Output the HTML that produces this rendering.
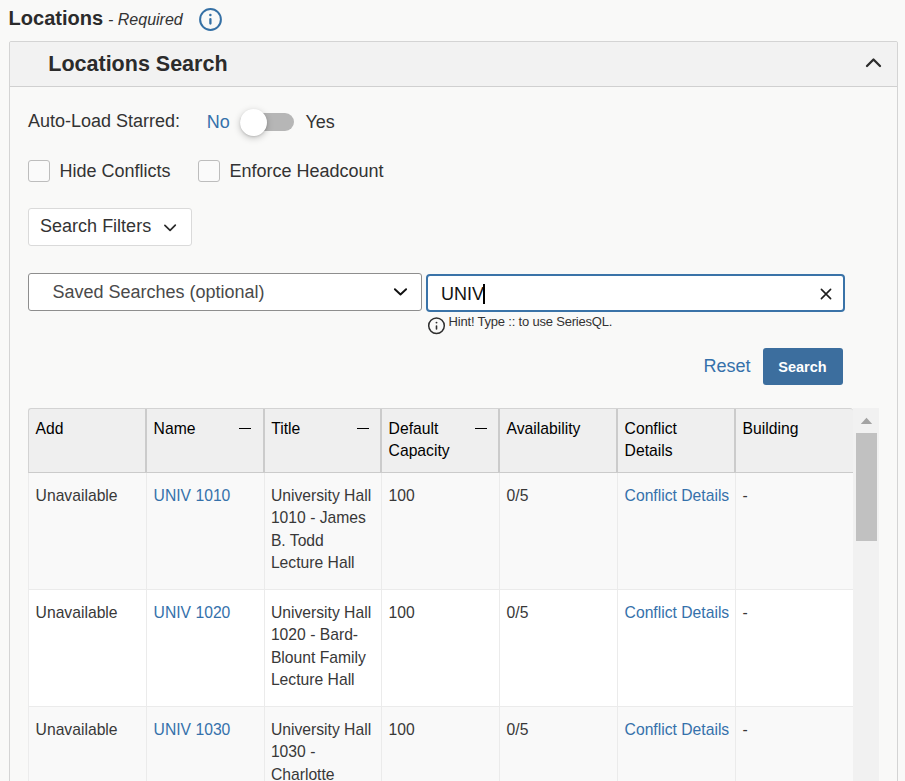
<!DOCTYPE html>
<html><head><meta charset="utf-8">
<style>
*{box-sizing:border-box;margin:0;padding:0}
html,body{width:905px;height:781px;overflow:hidden;background:#f9f9f8;font-family:"Liberation Sans",sans-serif;color:#333}
.a{position:absolute;white-space:nowrap;line-height:1}
.blue,.c.blue{color:#3571ab}
#panel{position:absolute;left:9px;top:41px;width:889px;height:760px;border:1px solid #d4d4d4;border-radius:2px;background:#f9f9f8}
#phead{position:absolute;left:0;top:0;width:887px;height:45px;background:#f2f2f2;border-bottom:1px solid #d0d0d0;border-radius:2px 2px 0 0}
.cb{position:absolute;width:22px;height:22px;border:1px solid #bdbdbd;border-radius:3px;background:#fafafa}
svg{position:absolute;overflow:visible}
#tbl{position:absolute;left:28px;top:408px;width:825px;height:400px}
.th{position:absolute;top:0;height:64px;background:#efefef;border-top:1px solid #d2d2d2;border-bottom:2px solid #cfcfcf}
.sep{position:absolute;width:2px;background:#cbcbcb}
.bsep{position:absolute;width:1px;background:#ebebeb}
.row{position:absolute;left:0;width:825px;height:117px;border-bottom:1px solid #e6e6e6}
.c{position:absolute;font-size:15.7px;line-height:22.57px;color:#383838;white-space:normal}
.h{position:absolute;font-size:15.7px;line-height:21.9px;color:#000}
</style></head><body>

<!-- Title -->
<div class="a" style="left:8.6px;top:8.1px;font-size:20px;font-weight:bold;color:#2b2b2b">Locations</div>
<div class="a" style="left:103.6px;top:12.2px;font-size:16px;font-style:italic;color:#333">&nbsp;- Required</div>
<svg style="left:199px;top:8px" width="23" height="23" viewBox="0 0 23 23">
  <circle cx="11.5" cy="11.5" r="10.4" fill="none" stroke="#3570a5" stroke-width="2"/>
  <circle cx="11.4" cy="7.1" r="1.25" fill="#3570a5"/>
  <line x1="11.4" y1="11.1" x2="11.4" y2="15.5" stroke="#3570a5" stroke-width="2.3" stroke-linecap="round"/>
</svg>

<div id="panel">
  <div id="phead"></div>
</div>
<div class="a" style="left:48.3px;top:53.6px;font-size:21.5px;font-weight:bold;color:#2b2b2b">Locations Search</div>
<svg style="left:865px;top:57px" width="18" height="11" viewBox="0 0 18 11">
  <polyline points="2,9 8.5,2.5 15,9" fill="none" stroke="#2d2d2d" stroke-width="2.3" stroke-linecap="round" stroke-linejoin="round"/>
</svg>

<!-- Auto-load -->
<div class="a" style="left:28px;top:112.3px;font-size:18px">Auto-Load Starred:</div>
<div class="a blue" style="left:206.8px;top:112.8px;font-size:18px">No</div>
<div style="position:absolute;left:240px;top:113px;width:54px;height:18px;border-radius:9px;background:#b6b6b6"></div>
<div style="position:absolute;left:239.6px;top:109px;width:27px;height:27px;border-radius:50%;background:#fff;box-shadow:0 2px 7px rgba(0,0,0,0.22),0 1px 2px rgba(0,0,0,0.12)"></div>
<div class="a" style="left:305.4px;top:112.8px;font-size:18px">Yes</div>

<!-- checkboxes -->
<div class="cb" style="left:28px;top:160px"></div>
<div class="a" style="left:59.4px;top:161.6px;font-size:18px">Hide Conflicts</div>
<div class="cb" style="left:198px;top:160px"></div>
<div class="a" style="left:229.4px;top:161.6px;font-size:18px">Enforce Headcount</div>

<!-- search filters -->
<div style="position:absolute;left:28px;top:208px;width:164px;height:38px;border:1px solid #dadada;border-radius:3px;background:#fff"></div>
<div class="a" style="left:40.1px;top:216.6px;font-size:18px">Search Filters</div>
<svg style="left:164px;top:223px" width="13" height="9" viewBox="0 0 13 9">
  <polyline points="0.9,2.3 6.1,7.4 11.3,2.2" fill="none" stroke="#2a2a2a" stroke-width="1.7" stroke-linecap="round" stroke-linejoin="round"/>
</svg>

<!-- saved searches -->
<div style="position:absolute;left:28px;top:273px;width:394px;height:38px;border:1px solid #8e8e8e;border-radius:3px;background:#fff"></div>
<div class="a" style="left:52.4px;top:282.8px;font-size:18px;color:#4a4a4a">Saved Searches (optional)</div>
<svg style="left:393px;top:287px" width="15" height="10" viewBox="0 0 15 10">
  <polyline points="1.9,2.2 7.5,7.5 13.1,2.2" fill="none" stroke="#111" stroke-width="1.9" stroke-linecap="round" stroke-linejoin="round"/>
</svg>

<!-- input -->
<div style="position:absolute;left:426px;top:274px;width:419px;height:38px;border:2px solid #3a73a8;border-radius:4px;background:#fff"></div>
<div class="a" style="left:440.9px;top:284.5px;font-size:18px;color:#111">UNIV</div>
<div style="position:absolute;left:483px;top:284px;width:1.5px;height:20px;background:#000"></div>
<svg style="left:819px;top:288px" width="14" height="13" viewBox="0 0 14 13">
  <path d="M2.4,1.4 L11.6,10.6 M11.6,1.4 L2.4,10.6" fill="none" stroke="#1e1e1e" stroke-width="1.6" stroke-linecap="round"/>
</svg>

<!-- hint -->
<svg style="left:427px;top:316.6px" width="19" height="19" viewBox="0 0 19 19">
  <circle cx="9.5" cy="8.8" r="7.8" fill="none" stroke="#2e2e2e" stroke-width="1.5"/>
  <circle cx="9.5" cy="5.6" r="0.95" fill="#2e2e2e"/>
  <line x1="9.5" y1="9" x2="9.5" y2="11.9" stroke="#2e2e2e" stroke-width="1.6" stroke-linecap="round"/>
</svg>
<div class="a" style="left:448.6px;top:314.8px;font-size:13px;letter-spacing:-0.2px;color:#333">Hint! Type :: to use SeriesQL.</div>

<!-- buttons -->
<div class="a blue" style="left:703.5px;top:356.8px;font-size:18px">Reset</div>
<div style="position:absolute;left:763px;top:348px;width:80px;height:37px;border-radius:3px;background:#3c6e9e"></div>
<div class="a" style="left:778.3px;top:359.9px;font-size:14.5px;font-weight:bold;color:#fff">Search</div>

<!-- table -->
<div style="position:absolute;left:28px;top:408px;width:825px;height:65px;background:#efefef;border-top:1px solid #d3d3d3;border-left:1px solid #d3d3d3;border-bottom:1px solid #cbcbcb;border-radius:3px 3px 0 0"></div>
<div style="position:absolute;left:28px;top:473px;width:825px;height:117px;background:#f9f9f9;border-bottom:1px solid #ebebeb"></div>
<div style="position:absolute;left:28px;top:590px;width:825px;height:117px;background:#fff;border-bottom:1px solid #ebebeb"></div>
<div style="position:absolute;left:28px;top:707px;width:825px;height:117px;background:#f9f9f9;border-bottom:1px solid #ebebeb"></div>
<div style="position:absolute;left:28px;top:473px;width:1px;height:320px;background:#ececec"></div>
<!-- header seps -->
<div class="sep" style="left:145px;top:409px;height:63px"></div>
<div class="sep" style="left:263px;top:409px;height:63px"></div>
<div class="sep" style="left:380px;top:409px;height:63px"></div>
<div class="sep" style="left:498px;top:409px;height:63px"></div>
<div class="sep" style="left:616px;top:409px;height:63px"></div>
<div class="sep" style="left:734px;top:409px;height:63px"></div>
<!-- body seps -->
<div class="bsep" style="left:146px;top:473px;height:320px"></div>
<div class="bsep" style="left:264px;top:473px;height:320px"></div>
<div class="bsep" style="left:381px;top:473px;height:320px"></div>
<div class="bsep" style="left:499px;top:473px;height:320px"></div>
<div class="bsep" style="left:617px;top:473px;height:320px"></div>
<div class="bsep" style="left:735px;top:473px;height:320px"></div>

<!-- header text -->
<div class="h" style="left:35.6px;top:418px">Add</div>
<div class="h" style="left:153.6px;top:418px">Name</div>
<div class="h" style="left:271.2px;top:418px">Title</div>
<div class="h" style="left:388.6px;top:418px">Default<br>Capacity</div>
<div class="h" style="left:506.6px;top:418px">Availability</div>
<div class="h" style="left:624.6px;top:418px">Conflict<br>Details</div>
<div class="h" style="left:742.6px;top:418px">Building</div>
<div style="position:absolute;left:239px;top:428px;width:12px;height:1px;background:#000"></div>
<div style="position:absolute;left:357px;top:428px;width:12px;height:1px;background:#000"></div>
<div style="position:absolute;left:475px;top:428px;width:12px;height:1px;background:#000"></div>

<!-- rows -->
<div class="c" style="left:35.6px;top:484.6px">Unavailable</div>
<div class="c blue" style="left:153.6px;top:484.6px">UNIV 1010</div>
<div class="c" style="left:270.9px;top:484.6px;width:108px">University Hall<br>1010 - James<br>B. Todd<br>Lecture Hall</div>
<div class="c" style="left:388.6px;top:484.6px">100</div>
<div class="c" style="left:506.6px;top:484.6px">0/5</div>
<div class="c blue" style="left:624.6px;top:484.6px">Conflict Details</div>
<div class="c" style="left:742.6px;top:484.6px">-</div>

<div class="c" style="left:35.6px;top:601.6px">Unavailable</div>
<div class="c blue" style="left:153.6px;top:601.6px">UNIV 1020</div>
<div class="c" style="left:270.9px;top:601.6px;width:108px">University Hall<br>1020 - Bard-<br>Blount Family<br>Lecture Hall</div>
<div class="c" style="left:388.6px;top:601.6px">100</div>
<div class="c" style="left:506.6px;top:601.6px">0/5</div>
<div class="c blue" style="left:624.6px;top:601.6px">Conflict Details</div>
<div class="c" style="left:742.6px;top:601.6px">-</div>

<div class="c" style="left:35.6px;top:718.6px">Unavailable</div>
<div class="c blue" style="left:153.6px;top:718.6px">UNIV 1030</div>
<div class="c" style="left:270.9px;top:718.6px;width:108px">University Hall<br>1030 -<br>Charlotte<br>Lecture Hall</div>
<div class="c" style="left:388.6px;top:718.6px">100</div>
<div class="c" style="left:506.6px;top:718.6px">0/5</div>
<div class="c blue" style="left:624.6px;top:718.6px">Conflict Details</div>
<div class="c" style="left:742.6px;top:718.6px">-</div>

<!-- scrollbar -->
<div style="position:absolute;left:853px;top:408px;width:26px;height:400px;background:#f1f1f1"></div>
<svg style="left:860px;top:417px" width="13" height="8" viewBox="0 0 13 8">
  <polygon points="0.8,7 6.5,0.8 12.2,7" fill="#a3a3a3"/>
</svg>
<div style="position:absolute;left:856px;top:433px;width:21px;height:108px;background:#c1c1c1"></div>

</body></html>
